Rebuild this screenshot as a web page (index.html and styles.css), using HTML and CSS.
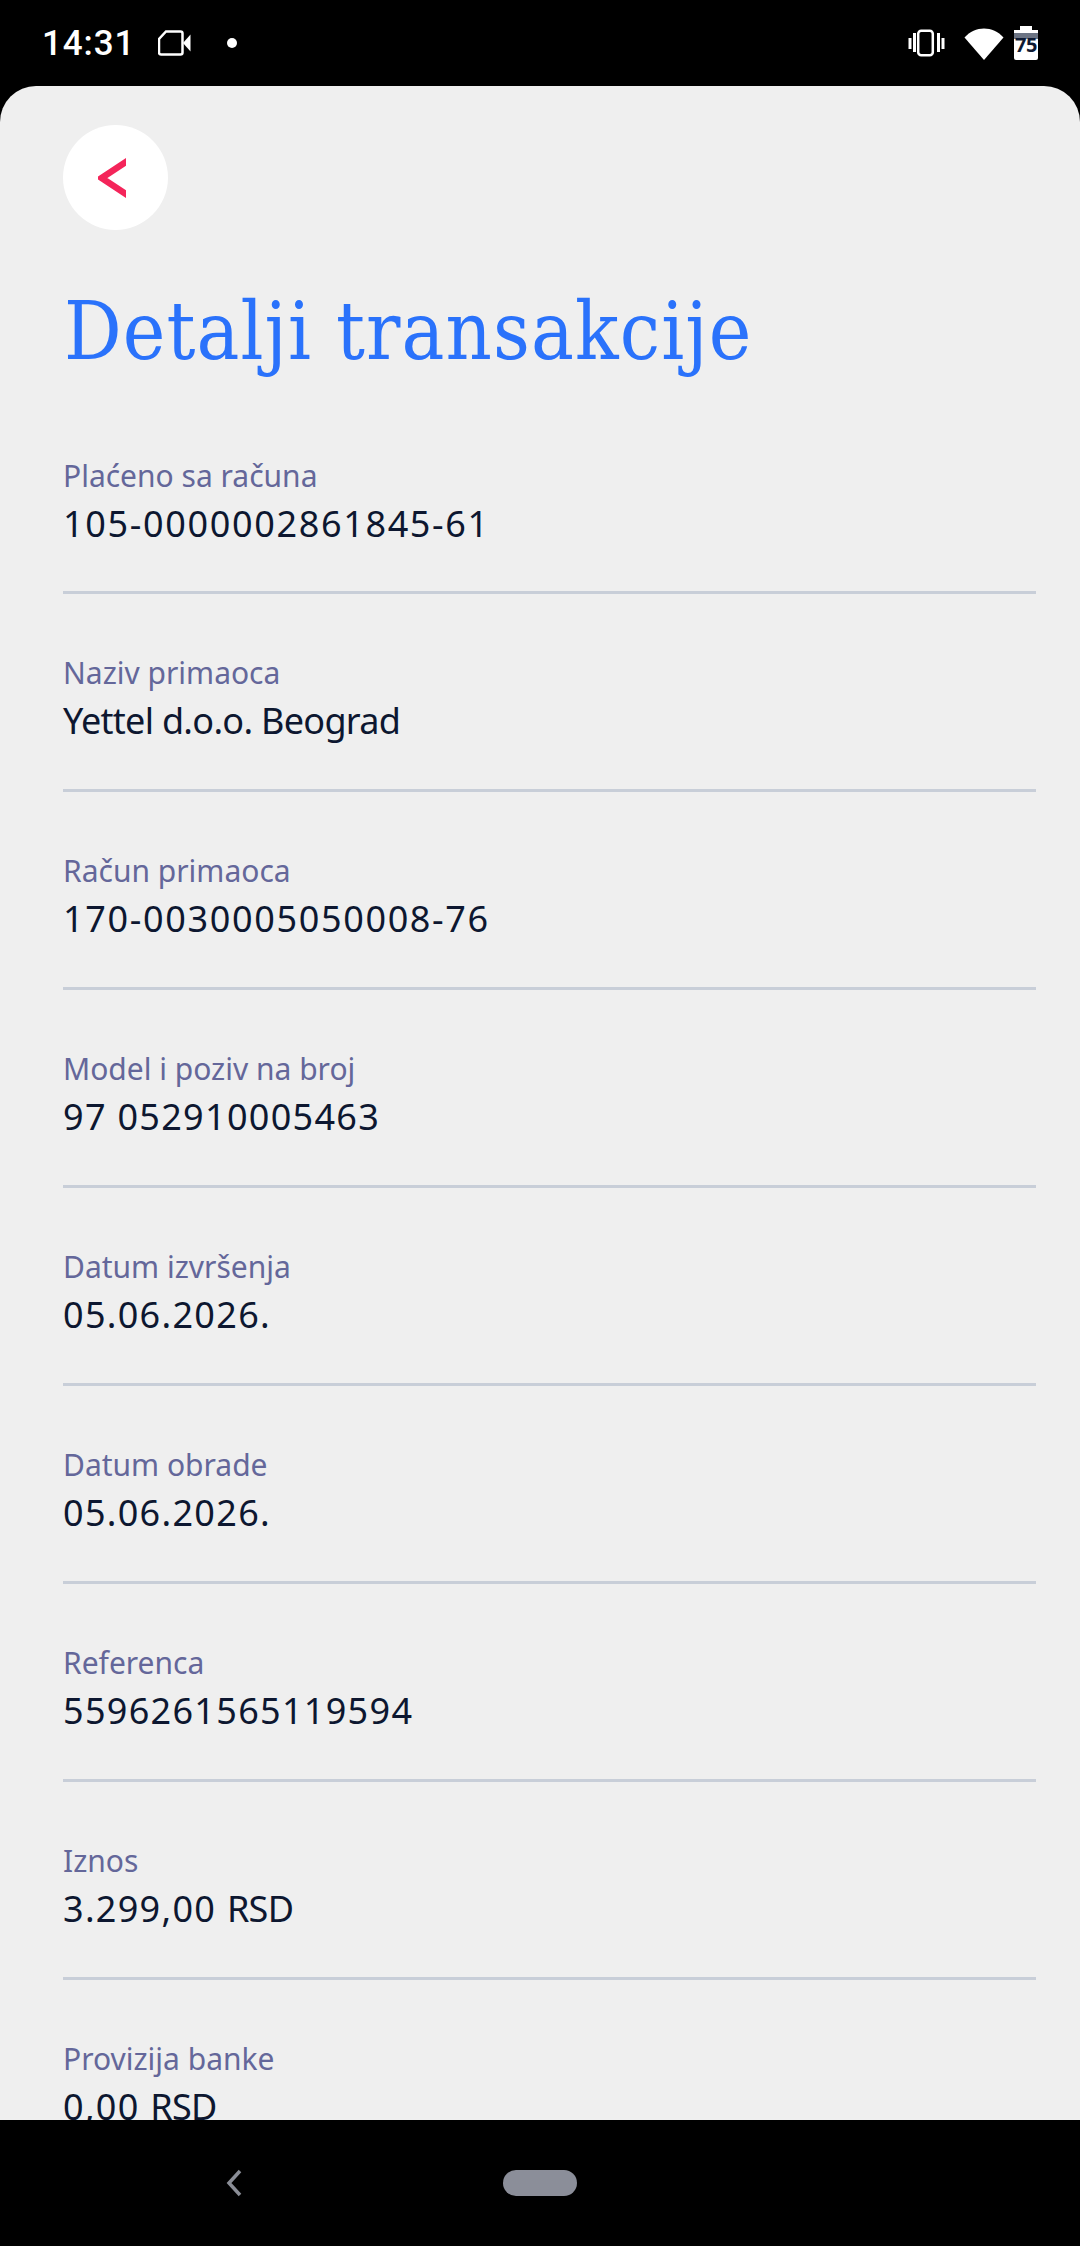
FILE: index.html
```html
<!DOCTYPE html>
<html lang="en">
<head>
    <meta charset="UTF-8">
    <meta name="viewport" content="width=device-width, initial-scale=1.0">
    <title>Detalji transakcije</title>
    <link rel="stylesheet" href="styles.css">
</head>
<body>
    <!-- status bar -->
    <div class="statusbar">
        <div class="status-left">
            <span class="clock">14:31</span>
            <svg class="ic-cam" width="34" height="28" viewBox="0 0 34 28"><path d="M8 2.500h14.500a2 2 0 0 1 2 2v19a2 2 0 0 1-2 2H3a2 2 0 0 1-2-2V10z" fill="none" stroke="#fff" stroke-width="2.500"/><path d="M25 14l7.500-8.500v17z" fill="#fff"/></svg>
            <span class="dot"></span>
        </div>
        <div class="status-right">
            <svg class="ic-vib" width="37" height="28" viewBox="0 0 37 28"><rect x="10.200" y="1.700" width="14.600" height="24.600" rx="3" fill="none" stroke="#fff" stroke-width="2.500"/><path d="M2 9v11M6.500 4v19M30.500 4v19M35 9v11" stroke="#fff" stroke-width="3" fill="none"/></svg>
            <svg class="ic-wifi" width="40" height="33" viewBox="0 0 40 33"><path d="M0.500 10.500C11 -1.500 29 -1.500 39.500 10.500L20 33z" fill="#fff"/></svg>
            <div class="battery"><span class="battery-cap"></span><span class="battery-num">75</span></div>
        </div>
    </div>

    <!-- main sheet -->
    <div class="sheet">
        <div class="back-btn">
            <svg width="28" height="42" viewBox="0 0 28 42"><path d="M34 1L3.500 21 34 41" fill="none" stroke="#f4255a" stroke-width="6.500"/></svg>
        </div>
        <h1 class="title">Detalji transakcije</h1>

        <div class="detail-list">
            <div class="detail-row">
                <div class="detail-label">Plaćeno sa računa</div>
                <div class="detail-value acct">105-0000002861845-61</div>
            </div>
            <div class="detail-row">
                <div class="detail-label">Naziv primaoca</div>
                <div class="detail-value">Yettel d.o.o. Beograd</div>
            </div>
            <div class="detail-row">
                <div class="detail-label">Račun primaoca</div>
                <div class="detail-value acct">170-0030005050008-76</div>
            </div>
            <div class="detail-row">
                <div class="detail-label">Model i poziv na broj</div>
                <div class="detail-value num">97 052910005463</div>
            </div>
            <div class="detail-row">
                <div class="detail-label">Datum izvršenja</div>
                <div class="detail-value num">05.06.2026.</div>
            </div>
            <div class="detail-row">
                <div class="detail-label">Datum obrade</div>
                <div class="detail-value num">05.06.2026.</div>
            </div>
            <div class="detail-row">
                <div class="detail-label">Referenca</div>
                <div class="detail-value num">5596261565119594</div>
            </div>
            <div class="detail-row">
                <div class="detail-label">Iznos</div>
                <div class="detail-value num">3.299,00 <span class="unit">RSD</span></div>
            </div>
            <div class="detail-row">
                <div class="detail-label">Provizija banke</div>
                <div class="detail-value num">0,00 <span class="unit">RSD</span></div>
            </div>
        </div>
    </div>

    <!-- nav bar -->
    <div class="navbar">
        <svg class="nav-back" width="16" height="28" viewBox="0 0 16 28"><path d="M14 2L3 14l11 12" fill="none" stroke="#8a8d96" stroke-width="3.500"/></svg>
        <span class="nav-home"></span>
    </div>
</body>
</html>
```

FILE: styles.css
```css
* {
    margin: 0;
    padding: 0;
    box-sizing: border-box;
}

body {
    width: 1080px;
    height: 2246px;
    background-color: #000;
    display: flex;
    flex-direction: column;
    overflow: hidden;
    font-family: "Noto Sans", Arial, sans-serif;
}

/* status bar */
.statusbar {
    flex-shrink: 0;
    height: 86px;
    padding: 0 42px 0 42px;
    display: flex;
    justify-content: space-between;
    align-items: center;
    color: #fff;
}

.status-left,
.status-right {
    display: flex;
    align-items: center;
}

.clock {
    font-family: Roboto, sans-serif;
    font-size: 35px;
    font-weight: 500;
    letter-spacing: 0.9px;
}

.ic-cam {
    margin-left: 23px;
}

.dot {
    width: 10px;
    height: 10px;
    margin-left: 35px;
    border-radius: 50%;
    background-color: #fff;
}

.ic-wifi {
    margin-left: 19px;
}

.battery {
    position: relative;
    width: 24px;
    height: 30px;
    margin: 4px 0 0 10px;
    background-color: #fff;
    border-radius: 2px;
    text-align: center;
}

.battery-cap {
    position: absolute;
    top: -4px;
    left: 6px;
    width: 12px;
    height: 5px;
    background-color: #fff;
}

.battery-num {
    position: relative;
    display: block;
    font-size: 20px;
    font-weight: 700;
    line-height: 30px;
    color: #0e1a33;
    background: linear-gradient(#fff 3px, #6c7484 3px, #6c7484 9px, transparent 9px);
    letter-spacing: -0.5px;
}

/* main sheet */
.sheet {
    flex: 1;
    min-height: 0;
    padding: 39px 44px 0 63px;
    background-color: #efefef;
    border-radius: 36px 36px 0 0;
    overflow: hidden;
}

.back-btn {
    width: 105px;
    height: 105px;
    background-color: #fff;
    border-radius: 50%;
    display: flex;
    align-items: center;
    justify-content: center;
    padding-right: 7px;
}

.title {
    margin: 50px 0 0 1px;
    font-family: "DejaVu Serif", "Liberation Serif", serif;
    font-stretch: condensed;
    font-size: 80px;
    font-weight: 400;
    line-height: 104px;
    color: #2a72fb;
    letter-spacing: 1.1px;
}

.detail-list {
    margin-top: 13px;
}

.detail-row {
    height: 198px;
    padding-top: 56px;
    border-bottom: 3px solid #c8ced8;
}

.detail-row:first-child {
    height: 197px;
}

.detail-label {
    font-size: 30px;
    line-height: 46px;
    color: #64679a;
}

.detail-value {
    font-size: 36px;
    line-height: 50px;
    color: #0d1730;
    letter-spacing: -0.7px;
}

.detail-value.num {
    letter-spacing: 1.3px;
}

.detail-value.acct {
    letter-spacing: 1.65px;
}

.unit {
    letter-spacing: -0.7px;
}

/* nav bar */
.navbar {
    flex-shrink: 0;
    height: 126px;
    padding-left: 226px;
    display: flex;
    align-items: center;
}

.nav-home {
    width: 74px;
    height: 26px;
    margin-left: 261px;
    background-color: #8b8e99;
    border-radius: 13px;
}
```
